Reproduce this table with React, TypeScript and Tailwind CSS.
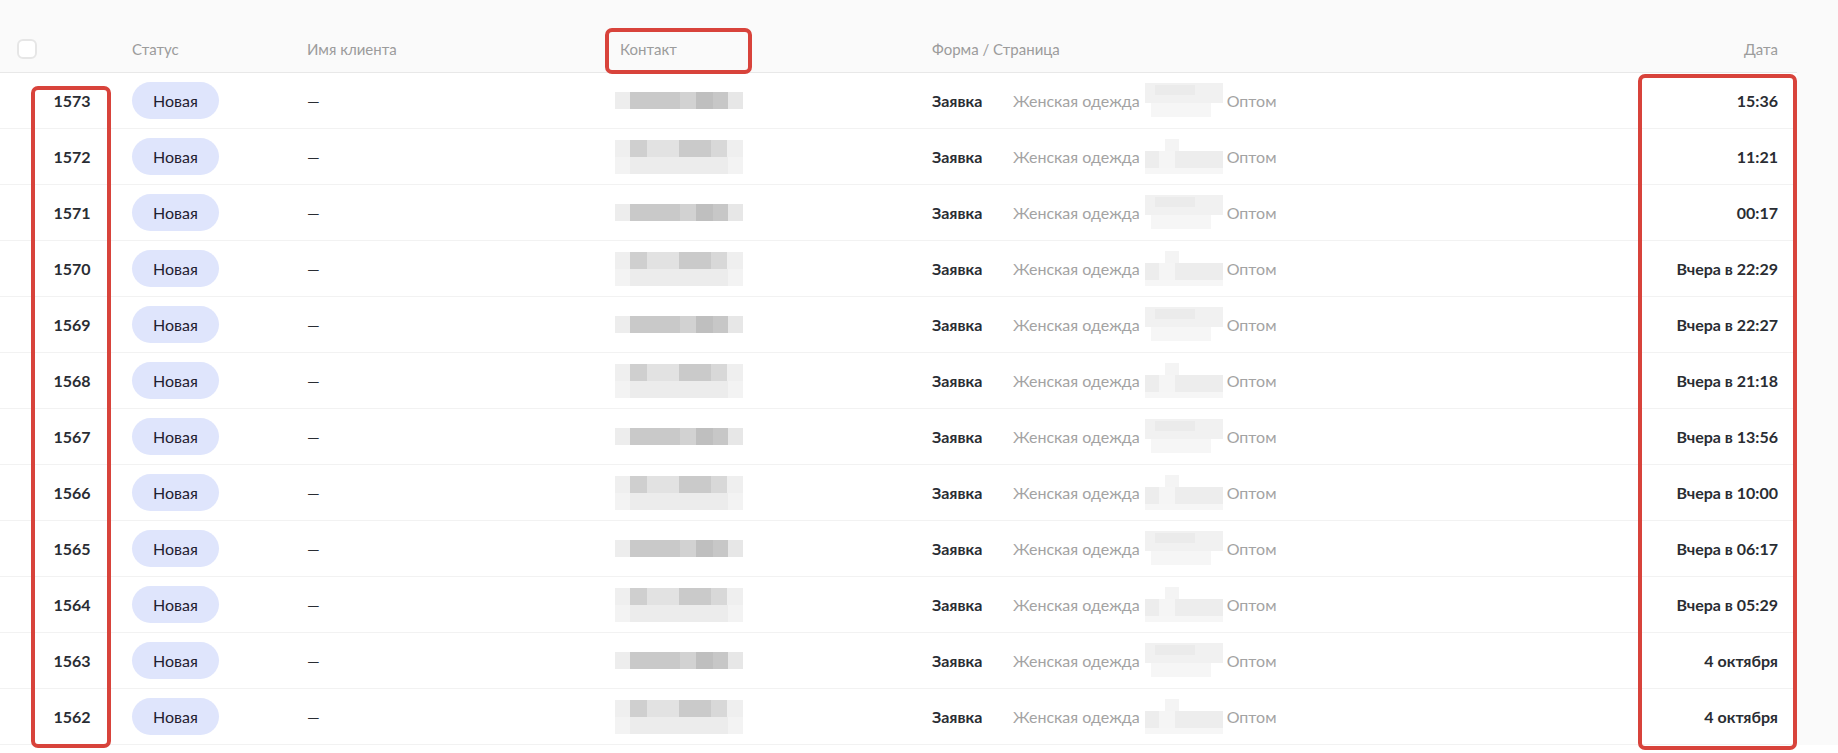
import React from "react";

type Row = {
  id: number;
  date: string;
  blur: "a" | "b";
};

const rows: Row[] = [
  { id: 1573, date: "15:36", blur: "a" },
  { id: 1572, date: "11:21", blur: "b" },
  { id: 1571, date: "00:17", blur: "a" },
  { id: 1570, date: "Вчера в 22:29", blur: "b" },
  { id: 1569, date: "Вчера в 22:27", blur: "a" },
  { id: 1568, date: "Вчера в 21:18", blur: "b" },
  { id: 1567, date: "Вчера в 13:56", blur: "a" },
  { id: 1566, date: "Вчера в 10:00", blur: "b" },
  { id: 1565, date: "Вчера в 06:17", blur: "a" },
  { id: 1564, date: "Вчера в 05:29", blur: "b" },
  { id: 1563, date: "4 октября", blur: "a" },
  { id: 1562, date: "4 октября", blur: "b" },
];

// pixelated contact (hidden data)
const ContactBlur = ({ kind }: { kind: "a" | "b" }) => {
  if (kind === "a") {
    return (
      <svg width={130} height={36} viewBox="0 0 130 36" className="-ml-[5px]">
        <rect x={0} y={9} width={128} height={17} fill="#ededed" />
        <rect x={15} y={9} width={50} height={17} fill="#c9c9c9" />
        <rect x={65} y={9} width={16} height={17} fill="#d2d2d2" />
        <rect x={81} y={9} width={17} height={17} fill="#bfbfbf" />
        <rect x={98} y={9} width={15} height={17} fill="#c7c7c7" />
        <rect x={113} y={9} width={15} height={17} fill="#e7e7e7" />
      </svg>
    );
  }
  return (
    <svg width={130} height={36} viewBox="0 0 130 36" className="-ml-[5px]">
      <rect x={0} y={1} width={128} height={17} fill="#efefef" />
      <rect x={15} y={1} width={17} height={17} fill="#cfcfcf" />
      <rect x={32} y={1} width={32} height={17} fill="#e2e2e2" />
      <rect x={64} y={1} width={32} height={17} fill="#cacaca" />
      <rect x={96} y={1} width={16} height={17} fill="#d8d8d8" />
      <rect x={0} y={18} width={128} height={17} fill="#f3f3f3" />
      <rect x={15} y={18} width={98} height={17} fill="#ececec" />
    </svg>
  );
};

const FormBlur = ({ kind }: { kind: "a" | "b" }) => (
  <svg width={78} height={36} viewBox="0 0 78 36">
    {kind === "a" ? (
      <>
        <rect x={0} y={0} width={78} height={20} fill="#f1f1f1" />
        <rect x={10} y={2} width={40} height={10} fill="#ebebeb" />
        <rect x={6} y={20} width={60} height={14} fill="#f6f6f6" />
      </>
    ) : (
      <>
        <rect x={20} y={0} width={14} height={12} fill="#f4f4f4" />
        <rect x={0} y={12} width={78} height={17} fill="#ededed" />
        <rect x={14} y={12} width={16} height={17} fill="#f5f5f5" />
        <rect x={0} y={29} width={78} height={6} fill="#f6f6f6" />
      </>
    )}
  </svg>
);

const Annotation = ({ className }: { className: string }) => (
  <div
    className={
      "absolute border-[4px] border-[#d8433b] rounded-[7px] pointer-events-none " +
      className
    }
  />
);

export default function App() {
  return (
    <div
      className="relative w-[1838px] h-[753px] overflow-hidden bg-white text-[16px]"
      style={{ fontFamily: "Lato, 'Open Sans', Arial, sans-serif" }}
    >
      <div className="flex">
        <div className="w-[1797px]">
          {/* header */}
          <div className="flex items-end h-[73px] bg-[#fafafa] border-b border-[#e8e8e8] pb-[13px] text-[15px] text-[#9c9c9c]">
            <div className="w-[132px] pl-[17px] flex items-center h-[20px]">
              <div className="w-[20px] h-[20px] rounded-[6px] border-2 border-[#e6e6e6] bg-white" />
            </div>
            <div className="w-[175px] leading-[20px]">Статус</div>
            <div className="w-[313px] leading-[20px]">Имя клиента</div>
            <div className="w-[312px] leading-[20px]">Контакт</div>
            <div className="flex-1 leading-[20px]">Форма / Страница</div>
            <div className="pr-[19px] leading-[20px]">Дата</div>
          </div>

          {/* rows */}
          {rows.map((r) => (
            <div
              key={r.id}
              className="flex items-center h-[56px] border-b border-[#f2f2f2]"
            >
              <div className="w-[132px] pl-[12px]">
                <div className="w-[120px] text-center font-bold text-[#2a2d33]">
                  {r.id}
                </div>
              </div>
              <div className="w-[175px]">
                <span className="inline-flex items-center justify-center w-[87px] h-[37px] rounded-full bg-[#dfe5fc] text-[#1f2030]">
                  Новая
                </span>
              </div>
              <div className="w-[313px] text-[#2a2d33]">—</div>
              <div className="w-[312px] flex">
                <ContactBlur kind={r.blur} />
              </div>
              <div className="flex-1 flex items-center">
                <span className="font-bold text-[#2a2d33] w-[81px]">Заявка</span>
                <span className="text-[#a3a3a3]">Женская одежда</span>
                <span className="ml-[5px] mr-[4px] flex">
                  <FormBlur kind={r.blur} />
                </span>
                <span className="text-[#a3a3a3]">Оптом</span>
              </div>
              <div className="pr-[19px] font-bold text-[#2a2d33]">{r.date}</div>
            </div>
          ))}
        </div>
        <div className="flex-1 bg-[#fafafa]" />
      </div>

      {/* annotation frames drawn over the table */}
      <Annotation className="left-[605px] top-[28px] w-[147px] h-[46px]" />
      <Annotation className="left-[31px] top-[86px] w-[80px] h-[662px]" />
      <Annotation className="left-[1638px] top-[74px] w-[159px] h-[676px]" />
    </div>
  );
}
